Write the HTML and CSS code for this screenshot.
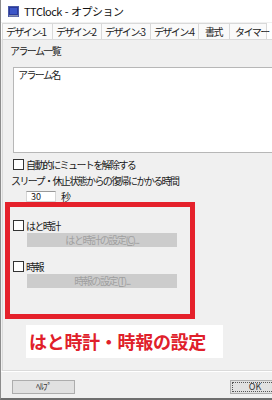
FILE: index.html
```html
<!DOCTYPE html>
<html lang="ja">
<head>
<meta charset="utf-8">
<link rel="stylesheet" href="styles.css">
</head>
<body>
<div class="win">
  <div class="titlebar">
    <svg class="appicon" width="11" height="11" viewBox="0 0 11 11"><rect x="0.5" y="0.5" width="10" height="10" fill="#2a3a9a" stroke="#4a5aa8"/><rect x="2" y="2" width="7" height="6" fill="#3c56c8"/><rect x="1" y="9" width="9" height="1.5" fill="#8890b0"/></svg>
    <span class="title">TTClock - オプション</span>
  </div>
  <div class="tabs">
    <div class="tab t1">デザイン-1</div>
    <div class="tab t2">デザイン-2</div>
    <div class="tab t3">デザイン-3</div>
    <div class="tab t4">デザイン-4</div>
    <div class="tab t5">書式</div>
    <div class="tab t6">タイマー</div>
  </div>
  <div class="panel">
    <div class="label">アラーム一覧</div>
    <div class="listbox"><div class="item">アラーム名</div></div>
    <div class="check row-mute"><span class="box"></span><span>自動的にミュートを解除する</span></div>
    <div class="label sleep">スリープ・休止状態からの復帰にかかる時間</div>
    <div class="secrow"><span class="input">30</span><span class="sec">秒</span></div>
    <div class="check row-hato"><span class="box"></span><span>はと時計</span></div>
    <div class="btn-dis">はと時計の設定(<u>C</u>)...</div>
    <div class="check row-jiho"><span class="box"></span><span>時報</span></div>
    <div class="btn-dis">時報の設定(<u>T</u>)...</div>
    <div class="redframe"></div>
    <div class="caption">はと時計・時報の設定</div>
  </div>
  <div class="footer">
    <div class="btn help">ﾍﾙﾌﾟ</div>
    <div class="btn ok">OK</div>
  </div>
</div>
</body>
</html>
```
FILE: styles.css
```css
* { box-sizing: border-box; }
html, body { margin: 0; padding: 0; }
body {
  width: 272px; height: 400px; overflow: hidden;
  background: #f0f0f0;
  font-family: "Noto Sans CJK JP", "Noto Sans", sans-serif;
  font-size: 10px;
  color: #1a1a1a;
}
.win {
  height: 400px;
  border-left: 1px solid #8c8c8c;
  border-bottom: 2px solid #6e6e6e;
  display: flex; flex-direction: column;
  background: #f0f0f0;
}
.titlebar {
  height: 22px; background: #fff;
  display: flex; align-items: center;
  padding-left: 7px; gap: 5px;
}
.title { font-family: "Noto Sans CJK JP", sans-serif; font-size: 11px; letter-spacing: -0.5px; word-spacing: 1px; color: #111; }
.tabs {
  display: flex; height: 16px; background: #fff;
  padding-left: 1px; margin-top: 1px;
}
.tab {
  height: 16px; line-height: 15px;
  border: 1px solid #d9d9d9; border-bottom: none;
  background: #fafafa;
  font-size: 10px; letter-spacing: -1.6px;
  padding: 0 2px 0 3px;
  margin-right: -1px;
  white-space: nowrap;
  color: #222;
}
.t1 { width: 51px; } .t2 { width: 50px; } .t3 { width: 50px; } .t4 { width: 49px; }
.t5 { width: 32px; padding-left: 6px; } .t6 { width: 38px; padding-left: 5px; }
.panel {
  position: relative;
  height: 332px;
  margin-left: 1px;
  border: 1px solid #dadada; border-right: none;
  background: #f0f0f0;
  padding: 4px 0 0 7px;
}
.label { font-size: 10px; letter-spacing: -1.6px; height: 14px; line-height: 14px; }
.listbox {
  margin: 9px 0 0 3px;
  height: 86px; background: #fff;
  border: 1px solid #b7b7b7; border-right: none;
  padding: 1px 0 0 4px;
}
.item { font-size: 10px; letter-spacing: -1.6px; line-height: 12px; }
.check { display: flex; align-items: center; gap: 2px; height: 12px; font-size: 10px; letter-spacing: -1.6px; margin-left: 3px; }
.box { width: 11px; height: 11px; border: 1px solid #333; background: #fff; flex: none; }
.row-mute { margin-top: 5px; }
.sleep { margin-top: 4px; margin-left: 1px; }
.secrow { display: flex; align-items: center; margin: 3px 0 0 16px; height: 11px; }
.input { width: 30px; height: 11px; background: #fff; border: 1px solid #d6d6d6; border-top-color: #9a9a9a; font-size: 9px; line-height: 9px; padding-left: 4px; }
.sec { font-size: 10px; margin-left: 5px; }
.row-hato { margin-top: 17px; }
.btn-dis {
  margin: 2px 0 0 17px; width: 150px; height: 14px;
  background: #cccccc; color: #a0a0a0;
  font-size: 10px; letter-spacing: -1.4px; line-height: 14px;
  text-align: center;
}
.btn-dis u { text-decoration-color: #a0a0a0; }
.row-jiho { margin-top: 13px; }
.redframe {
  position: absolute; left: 2px; top: 162px;
  width: 190px; height: 117px;
  border: 5px solid #e5212b;
}
.caption {
  position: absolute; left: 23px; top: 285px;
  width: 197px; height: 33px; background: #fff;
  color: #e0202a; font-weight: bold; font-size: 18px;
  line-height: 33px; padding-left: 3px; letter-spacing: -0.3px;
}
.footer {
  flex: 1; position: relative;
  display: flex; justify-content: space-between; align-items: flex-start;
  padding: 8px 0 0 11px;
  border-top: 1px solid #ffffff;
}
.btn {
  height: 14px; background: #e1e1e1; border: 1px solid #adadad;
  font-size: 9px; line-height: 12px; text-align: center; color: #333;
}
.help { width: 63px; letter-spacing: -1px; }
.ok { width: 50px; margin-right: -8px; outline: 1px dotted #555; outline-offset: -3px; }
```
